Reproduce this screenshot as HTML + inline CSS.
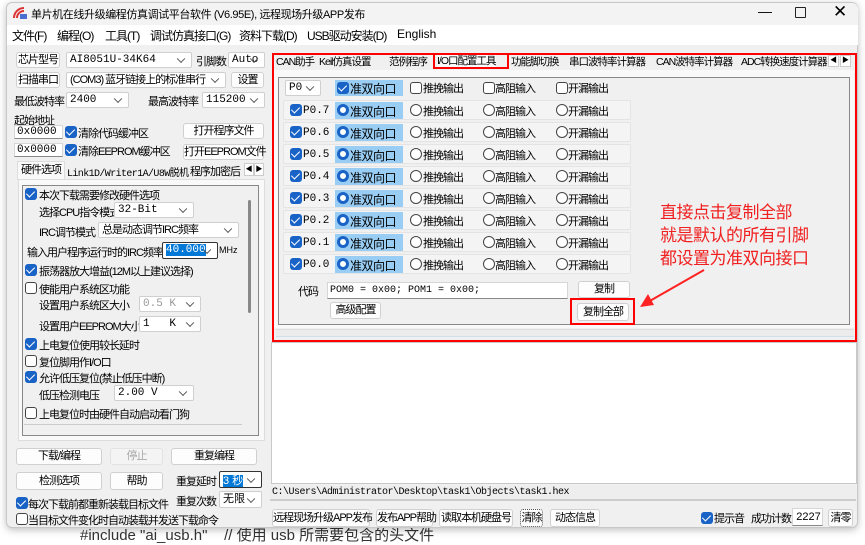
<!DOCTYPE html>
<html><head><meta charset="utf-8"><style>
*{box-sizing:border-box;margin:0;padding:0}
body{width:865px;height:537px;overflow:hidden;background:#fff;position:relative;font-family:"Liberation Sans","Noto Sans CJK SC",sans-serif;font-size:11px;letter-spacing:-1px;color:#000}
.a{position:absolute;white-space:nowrap}
.win{position:absolute;left:6px;top:2px;width:852px;height:526px;background:#f0f0f0;border:1px solid #c8c8c8;border-radius:6px;box-shadow:0 2px 8px rgba(0,0,0,.25);overflow:hidden}
.btn{position:absolute;background:#fdfdfd;border:1px solid #d0d0d0;border-radius:3px;text-align:center;white-space:nowrap}
.sel{position:absolute;background:#fff;border:1px solid #cfcfcf;border-radius:2px;padding-left:3px;white-space:nowrap;font-size:11px;letter-spacing:0;font-family:"Liberation Mono","Noto Sans CJK SC",monospace}
.sel:after{content:"";position:absolute;right:7px;top:50%;width:5px;height:5px;border-right:1px solid #555;border-bottom:1px solid #555;transform:translateY(-70%) rotate(45deg)}
.inp{position:absolute;background:#fff;border:1px solid #d6d6d6;border-bottom-color:#888;padding-left:2px;font-size:11px;letter-spacing:0;font-family:"Liberation Mono",monospace;white-space:nowrap}
.cb{position:absolute;width:12px;height:12px;border-radius:3px;background:#1a63c6}
.cb:after{content:"";position:absolute;left:3px;top:1px;width:4px;height:7px;border-right:1.6px solid #fff;border-bottom:1.6px solid #fff;transform:rotate(45deg)}
.cu{position:absolute;width:12px;height:12px;border-radius:3px;border:1px solid #444;background:#fff}
.ru{position:absolute;width:12px;height:12px;border-radius:50%;border:1px solid #444;background:#fff}
.rs{position:absolute;width:12px;height:12px;border-radius:50%;border:3.5px solid #1a63c6;background:#fff}
.row{position:absolute;left:283px;width:348px;height:20px;background:#f4f4f4;border:1px solid #e4e4e4;border-radius:2px}
.hl{position:absolute;background:#99cdf4}
.tab{position:absolute;top:55px;height:14px;font-size:10.5px;line-height:14px;background:#f0f0f0;white-space:nowrap;letter-spacing:-1px}
.m{font-size:12px;top:27px}
.z{font-size:12px;letter-spacing:-0.5px}
</style></head><body>
<div class="a" style="left:80px;top:524px;font-size:15px;color:#333;letter-spacing:0">#include "ai_usb.h"&nbsp;&nbsp;&nbsp;&nbsp;// 使用 usb 所需要包含的头文件</div>
<div class="win"></div>
<div class="a" style="left:7px;top:3px;width:851px;height:23px;background:#f3f3f3;border-radius:6px 6px 0 0"></div>
<svg class="a" style="left:12px;top:6px" width="16" height="14"><path d="M2 12 A10 10 0 0 1 12 2" stroke="#d33" stroke-width="2" fill="none"/><path d="M5 12 A7 7 0 0 1 12 5" stroke="#d33" stroke-width="2" fill="none"/><rect x="8" y="8" width="7" height="5" fill="#4a6fd0"/></svg>
<div class="a" style="left:31px;top:6px;font-size:11px;letter-spacing:-0.4px">单片机在线升级编程仿真调试平台软件 (V6.95E), 远程现场升级APP发布</div>
<div class="a" style="left:758px;top:3px;font-size:14px;letter-spacing:0">—</div>
<div class="a" style="left:795px;top:7px;width:11px;height:11px;border:1.3px solid #222;border-radius:1px"></div>
<div class="a" style="left:833px;top:2px;font-size:17px">✕</div>
<div class="a" style="left:7px;top:25px;width:851px;height:20px;background:#fff"></div>
<div class="a m" style="left:12px">文件(F)</div>
<div class="a m" style="left:57px">编程(O)</div>
<div class="a m" style="left:105px">工具(T)</div>
<div class="a m" style="left:150px">调试仿真接口(G)</div>
<div class="a m" style="left:239px">资料下载(D)</div>
<div class="a m" style="left:307px">USB驱动安装(D)</div>
<div class="a m" style="left:397px;letter-spacing:0">English</div>
<div class="btn" style="left:16px;top:52px;width:44px;height:16px;line-height:14px">芯片型号</div>
<div class="sel" style="left:66px;top:52px;width:126px;height:16px;line-height:14px">AI8051U-34K64</div>
<div class="a" style="left:196px;top:53px">引脚数</div>
<div class="sel" style="left:228px;top:52px;width:37px;height:16px;line-height:14px">Auto</div>
<div class="btn" style="left:16px;top:72px;width:44px;height:16px;line-height:14px">扫描串口</div>
<div class="sel" style="left:66px;top:72px;width:160px;height:16px;line-height:14px;letter-spacing:-1px;font-family:'Liberation Sans','Noto Sans CJK SC'">(COM3) 蓝牙链接上的标准串行</div>
<div class="btn" style="left:231px;top:72px;width:33px;height:16px;line-height:14px">设置</div>
<div class="a" style="left:14px;top:93px">最低波特率</div>
<div class="sel" style="left:66px;top:92px;width:63px;height:16px;line-height:14px">2400</div>
<div class="a" style="left:148px;top:93px">最高波特率</div>
<div class="sel" style="left:202px;top:92px;width:63px;height:16px;line-height:14px">115200</div>
<div class="a" style="left:14px;top:112px">起始地址</div>
<div class="inp" style="left:14px;top:125px;width:49px;height:14px;line-height:12px">0x0000</div>
<div class="cb" style="left:65px;top:126px"></div><div class="a" style="left:78px;top:125px">清除代码缓冲区</div>
<div class="btn" style="left:183px;top:123px;width:81px;height:16px;line-height:14px">打开程序文件</div>
<div class="inp" style="left:14px;top:143px;width:49px;height:14px;line-height:12px">0x0000</div>
<div class="cb" style="left:65px;top:144px"></div><div class="a" style="left:78px;top:143px">清除EEPROM缓冲区</div>
<div class="btn" style="left:183px;top:144px;width:81px;height:16px;line-height:14px">打开EEPROM文件</div>
<div class="a" style="left:17px;top:161px;width:48px;height:19px;background:#f9f9f9;border:1px solid #ddd;border-bottom:none;text-align:center;line-height:17px">硬件选项</div>
<div class="a" style="left:67px;top:164px;font-size:10px;letter-spacing:-0.6px;font-family:'Liberation Mono','Noto Sans CJK SC'">Link1D/Writer1A/U8W脱机</div>
<div class="a" style="left:190px;top:163px">程序加密后</div>
<div class="a" style="left:244px;top:163px;width:10px;height:13px;background:#fff;border:1px solid #ccc;font-size:7px;line-height:11px;text-align:center;letter-spacing:0">◀</div>
<div class="a" style="left:254px;top:163px;width:10px;height:13px;background:#fff;border:1px solid #ccc;font-size:7px;line-height:11px;text-align:center;letter-spacing:0">▶</div>
<div class="a" style="left:18px;top:179px;width:247px;height:262px;background:#f9f9f9;border:1px solid #ddd"></div>
<div class="a" style="left:22px;top:185px;width:237px;height:251px;border:1px solid #888;background:#f0f0f0"></div>
<div class="a" style="left:24px;top:424px;width:218px;height:1px;background:#ccc"></div>
<div class="a" style="left:248px;top:200px;width:3px;height:113px;background:#888;border-radius:2px"></div>
<div class="cb" style="left:25px;top:188px"></div><div class="a" style="left:39px;top:187px">本次下载需要修改硬件选项</div>
<div class="a" style="left:39px;top:204px">选择CPU指令模式</div><div class="sel" style="left:114px;top:202px;width:80px;height:16px;line-height:14px">32-Bit</div>
<div class="a" style="left:39px;top:224px">IRC调节模式</div><div class="sel" style="left:98px;top:222px;width:141px;height:16px;line-height:14px;letter-spacing:-1px;font-family:'Liberation Sans','Noto Sans CJK SC'">总是动态调节IRC频率</div>
<div class="a" style="left:27px;top:244px">输入用户程序运行时的IRC频率</div>
<div class="sel" style="left:162px;top:242px;width:56px;height:17px;border-color:#333"><span style="background:#0078d7;color:#fff;line-height:14px">40.000</span></div>
<div class="a" style="left:219px;top:245px;font-size:9px;letter-spacing:0">MHz</div>
<div class="cb" style="left:25px;top:264px"></div><div class="a" style="left:39px;top:263px">振荡器放大增益(12M以上建议选择)</div>
<div class="cu" style="left:25px;top:282px"></div><div class="a" style="left:39px;top:281px">使能用户系统区功能</div>
<div class="a" style="left:39px;top:297px">设置用户系统区大小</div><div class="sel" style="left:139px;top:296px;width:62px;height:16px;line-height:14px;color:#999">0.5 K</div>
<div class="a" style="left:39px;top:318px">设置用户EEPROM大小</div><div class="sel" style="left:139px;top:316px;width:62px;height:16px;line-height:14px">1&nbsp;&nbsp;&nbsp;K</div>
<div class="cb" style="left:25px;top:338px"></div><div class="a" style="left:39px;top:337px">上电复位使用较长延时</div>
<div class="cu" style="left:25px;top:355px"></div><div class="a" style="left:39px;top:354px">复位脚用作I/O口</div>
<div class="cb" style="left:25px;top:371px"></div><div class="a" style="left:39px;top:370px">允许低压复位(禁止低压中断)</div>
<div class="a" style="left:39px;top:387px">低压检测电压</div><div class="sel" style="left:114px;top:385px;width:80px;height:16px;line-height:14px">2.00 V</div>
<div class="cu" style="left:25px;top:407px"></div><div class="a" style="left:39px;top:406px">上电复位时由硬件自动启动看门狗</div>
<div class="btn" style="left:16px;top:448px;width:86px;height:17px;line-height:15px">下载/编程</div>
<div class="btn" style="left:110px;top:448px;width:53px;height:17px;line-height:15px;color:#aaa;background:#f4f4f4;border-color:#e2e2e2">停止</div>
<div class="btn" style="left:171px;top:448px;width:86px;height:17px;line-height:15px">重复编程</div>
<div class="btn" style="left:16px;top:472px;width:86px;height:18px;line-height:16px">检测选项</div>
<div class="btn" style="left:110px;top:472px;width:53px;height:18px;line-height:16px">帮助</div>
<div class="a" style="left:176px;top:473px">重复延时</div>
<div class="sel" style="left:219px;top:471px;width:43px;height:17px;border-color:#333;font-family:'Liberation Sans','Noto Sans CJK SC'"><span style="background:#0078d7;color:#fff">3 秒</span></div>
<div class="cb" style="left:16px;top:497px"></div><div class="a" style="left:28px;top:496px">每次下载前都重新装载目标文件</div>
<div class="a" style="left:176px;top:493px">重复次数</div>
<div class="sel" style="left:219px;top:491px;width:43px;height:17px;line-height:15px;font-family:'Liberation Sans','Noto Sans CJK SC'">无限</div>
<div class="cu" style="left:16px;top:513px"></div><div class="a" style="left:28px;top:512px">当目标文件变化时自动装载并发送下载命令</div>
<div class="a" style="left:271px;top:342px;width:586px;height:142px;background:#fff;border:1px solid #c8c8c8"></div>
<div class="a" style="left:276px;top:329px;width:578px;height:8px;border-top:1px solid #ddd;border-bottom:1px solid #cfe0ec;background:#ececec"></div>
<div class="a" style="left:270px;top:486px;width:586px;height:15px;background:#eee;border-bottom:2px solid #ccc"></div>
<div class="a" style="left:272px;top:487px;font-size:10px;letter-spacing:-0.5px;font-family:'Liberation Mono',monospace">C:\Users\Administrator\Desktop\task1\Objects\task1.hex</div>
<div class="btn" style="left:272px;top:509px;width:98px;height:18px;line-height:16px">远程现场升级APP发布</div>
<div class="btn" style="left:376px;top:509px;width:57px;height:18px;line-height:16px">发布APP帮助</div>
<div class="btn" style="left:439px;top:509px;width:74px;height:18px;line-height:16px">读取本机硬盘号</div>
<div class="btn" style="left:520px;top:509px;width:23px;height:18px;line-height:16px;border:1px dotted #555">清除</div>
<div class="btn" style="left:550px;top:509px;width:50px;height:18px;line-height:16px">动态信息</div>
<div class="cb" style="left:701px;top:512px"></div><div class="a" style="left:714px;top:510px">提示音</div>
<div class="a" style="left:751px;top:510px">成功计数</div>
<div class="inp" style="left:792px;top:508px;width:31px;height:18px;line-height:16px;text-align:center;font-family:'Liberation Sans'">2227</div>
<div class="btn" style="left:828px;top:509px;width:25px;height:18px;line-height:16px">清零</div>
<div class="a" style="left:275px;top:53px;width:580px;height:17px;background:#f0f0f0"></div>
<div class="tab" style="left:276px">CAN助手</div>
<div class="tab" style="left:319px">Keil仿真设置</div>
<div class="tab" style="left:389px">范例程序</div>
<div class="tab" style="left:437px;top:54px;background:#fafafa">I/O口配置工具</div>
<div class="a" style="left:433px;top:53px;width:76px;height:16px;border:2px solid #f00"></div>
<div class="tab" style="left:511px">功能脚切换</div>
<div class="tab" style="left:569px">串口波特率计算器</div>
<div class="tab" style="left:656px">CAN波特率计算器</div>
<div class="tab" style="left:741px">ADC转换速度计算器</div>
<div class="a" style="left:828px;top:55px;width:11px;height:12px;background:#fff;border:1px solid #ccc;font-size:7px;line-height:10px;text-align:center;letter-spacing:0">◀</div>
<div class="a" style="left:840px;top:55px;width:11px;height:12px;background:#fff;border:1px solid #ccc;font-size:7px;line-height:10px;text-align:center;letter-spacing:0">▶</div>
<div class="a" style="left:274px;top:70px;width:580px;height:258px;background:#f9f9f9"></div>
<div class="a" style="left:278px;top:77px;width:572px;height:248px;border:1px solid #888;background:#f0f0f0"></div>
<div class="a" style="left:272px;top:53px;width:585px;height:289px;border:2px solid #f00"></div>
<div class="sel" style="left:285px;top:80px;width:36px;height:16px;line-height:14px">P0</div>
<div class="hl" style="left:335px;top:80px;width:68px;height:16px"></div>
<div class="cb" style="left:337px;top:82px"></div><div class="a z" style="left:350px;top:80px">准双向口</div>
<div class="cu" style="left:410px;top:82px"></div><div class="a" style="left:423px;top:80px">推挽输出</div>
<div class="cu" style="left:483px;top:82px"></div><div class="a" style="left:495px;top:80px">高阻输入</div>
<div class="cu" style="left:556px;top:82px"></div><div class="a" style="left:568px;top:80px">开漏输出</div>
<div class="row" style="top:100px"></div><div class="row" style="top:122px"></div><div class="row" style="top:144px"></div><div class="row" style="top:166px"></div><div class="row" style="top:188px"></div><div class="row" style="top:210px"></div><div class="row" style="top:232px"></div><div class="row" style="top:254px"></div>
<div id="rows"></div>
<div class="a" style="left:298px;top:283px">代码</div>
<div class="inp" style="left:327px;top:282px;width:241px;height:17px;line-height:15px;font-size:10px">POM0 = 0x00; POM1 = 0x00;</div>
<div class="btn" style="left:578px;top:281px;width:52px;height:17px;line-height:15px">复制</div>
<div class="btn" style="left:330px;top:302px;width:51px;height:17px;line-height:15px">高级配置</div>
<div class="btn" style="left:577px;top:303px;width:52px;height:18px;line-height:16px">复制全部</div>
<div class="a" style="left:570px;top:298px;width:65px;height:27px;border:2px solid #f00"></div>
<div class="a" style="left:660px;top:199px;font-size:17px;letter-spacing:-0.5px;color:#f02020;line-height:23px;font-family:'Noto Sans CJK SC',sans-serif">直接点击复制全部<br>就是默认的所有引脚<br>都设置为准双向接口</div>
<svg class="a" style="left:630px;top:260px" width="80" height="55"><line x1="74" y1="10" x2="18" y2="42" stroke="#f22" stroke-width="2"/><path d="M10 47 L18 34 L24 45 Z" fill="#f22"/></svg>
<script>
var h='',n=['7','6','5','4','3','2','1','0'];
for(var i=0;i<8;i++){var t=101+i*22;
h+='<div class="cb" style="left:290px;top:'+(t+3)+'px"></div><div class="a" style="left:303px;top:'+(t+4)+'px;font-size:11px;letter-spacing:0;font-family:\'Liberation Mono\'">P0.'+n[i]+'</div>'+
'<div class="hl" style="left:335px;top:'+(t+1)+'px;width:68px;height:17px"></div><div class="rs" style="left:337px;top:'+(t+3)+'px"></div><div class="a z" style="left:350px;top:'+(t+2)+'px">准双向口</div>'+
'<div class="ru" style="left:410px;top:'+(t+3)+'px"></div><div class="a" style="left:423px;top:'+(t+2)+'px">推挽输出</div>'+
'<div class="ru" style="left:483px;top:'+(t+3)+'px"></div><div class="a" style="left:495px;top:'+(t+2)+'px">高阻输入</div>'+
'<div class="ru" style="left:556px;top:'+(t+3)+'px"></div><div class="a" style="left:568px;top:'+(t+2)+'px">开漏输出</div>';}
document.getElementById('rows').innerHTML=h;
</script>
</body></html>
